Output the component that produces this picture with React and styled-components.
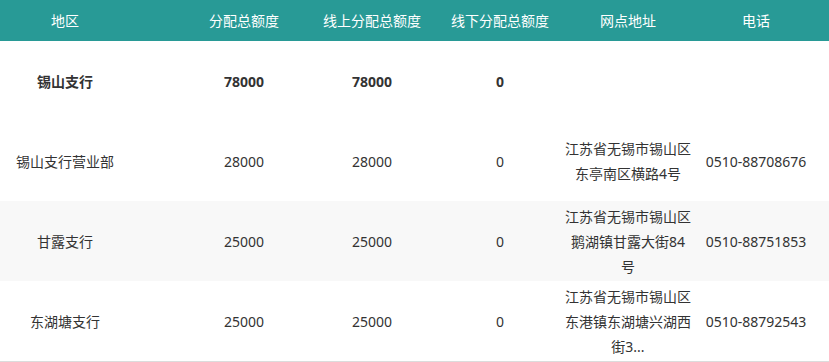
import React from 'react';
import styled, { createGlobalStyle } from 'styled-components';

const GlobalStyle = createGlobalStyle`
  html, body {
    margin: 0;
    padding: 0;
    background: #ffffff;
  }
  body {
    font-family: "Noto Sans", "Noto Sans CJK SC", sans-serif;
    font-size: 14px;
    color: #333333;
  }
`;

const Table = styled.div`
  width: 829px;
  border-bottom: 1px solid #dcdcdc;
`;

const Row = styled.div`
  display: grid;
  grid-template-columns: 180px repeat(5, 128px) 1fr;
  align-items: center;
  height: ${(p) => (p.$head ? 41 : 80)}px;
  background: ${(p) => (p.$head ? '#289a96' : p.$striped ? '#f8f8f8' : '#ffffff')};
  color: ${(p) => (p.$head ? '#ffffff' : '#333333')};
  font-weight: ${(p) => (p.$bold ? 700 : 400)};
`;

const Cell = styled.div`
  text-align: center;
  line-height: 25px;
  padding-right: ${(p) => (p.$first ? '50px' : '0')};
`;

const Address = styled(Cell)`
  padding: 0 0.75px;
  display: -webkit-box;
  -webkit-box-orient: vertical;
  -webkit-line-clamp: 3;
  overflow: hidden;
  word-break: break-all;
`;

const headers = ['地区', '分配总额度', '线上分配总额度', '线下分配总额度', '网点地址', '电话'];

const rows = [
  { name: '锡山支行', total: '78000', online: '78000', offline: '0', address: '', phone: '', bold: true },
  { name: '锡山支行营业部', total: '28000', online: '28000', offline: '0', address: '江苏省无锡市锡山区东亭南区横路4号', phone: '0510-88708676' },
  { name: '甘露支行', total: '25000', online: '25000', offline: '0', address: '江苏省无锡市锡山区鹅湖镇甘露大街84号', phone: '0510-88751853' },
  { name: '东湖塘支行', total: '25000', online: '25000', offline: '0', address: '江苏省无锡市锡山区东港镇东湖塘兴湖西街3...', phone: '0510-88792543' },
];

const App = () => (
  <>
    <GlobalStyle />
    <Table>
      <Row $head>
        {headers.map((h, i) => (
          <Cell key={h} $first={i === 0}>{h}</Cell>
        ))}
      </Row>
      {rows.map((r, i) => (
        <Row key={r.name} $bold={r.bold} $striped={i === 2}>
          <Cell $first>{r.name}</Cell>
          <Cell>{r.total}</Cell>
          <Cell>{r.online}</Cell>
          <Cell>{r.offline}</Cell>
          <Address>{r.address}</Address>
          <Cell>{r.phone}</Cell>
        </Row>
      ))}
    </Table>
  </>
);

export default App;
